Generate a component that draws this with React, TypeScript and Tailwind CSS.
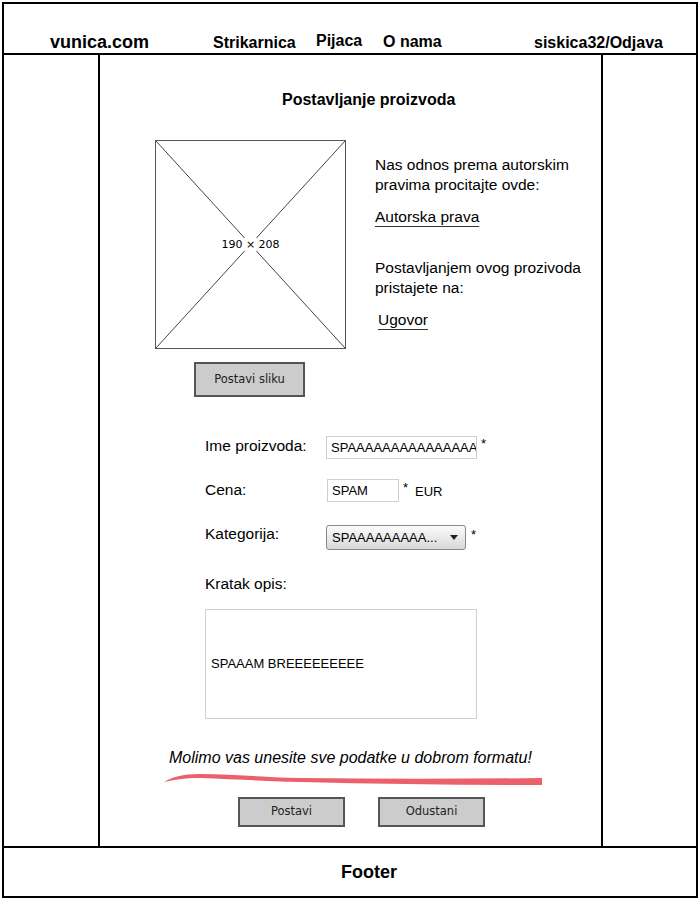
import React from 'react';

const Field: React.FC<{ w: string; text: string }> = ({ w, text }) => (
  <div className={`${w} h-[23px] border border-[#cfcfcf] bg-white pl-[4px] flex items-center overflow-hidden whitespace-nowrap text-[13px]`}>
    {text}
  </div>
);

const SketchButton: React.FC<{ label: string; w: string; h: string }> = ({ label, w, h }) => (
  <div className={`${w} ${h} bg-[#cccccc] border-2 border-[#555555] flex items-center justify-center font-['DejaVu_Sans',sans-serif] text-[11.5px] text-[#222]`}>
    {label}
  </div>
);

export default function App() {
  return (
    <div className="w-[700px] h-[900px] bg-white pl-[2px] pt-[2px] font-['Liberation_Sans',Arial,sans-serif] text-black">
      <div className="w-[696px] h-[896px] border-2 border-black flex flex-col">
        <header className="h-[51px] shrink-0 border-b-2 border-black flex items-start pt-[28px] pl-[46px] font-bold text-[16px] leading-[20px]">
          <span className="w-[163px] text-[18px]">vunica.com</span>
          <span className="w-[103px] mt-[1px]">Strikarnica</span>
          <span className="w-[67px] -mt-[1px]">Pijaca</span>
          <span className="w-[151px]">O nama</span>
          <span className="mt-[1px]">siskica32/Odjava</span>
        </header>

        <div className="flex flex-1 min-h-0">
          <div className="w-[96px] shrink-0 border-r-2 border-black" />

          <main className="w-[503px] shrink-0 border-r-2 border-black flex flex-col">
            <h1 className="pt-[35px] pl-[182px] text-[16px] leading-[20px] font-bold">Postavljanje proizvoda</h1>

            <div className="mt-[30px] flex items-start">
              <div className="ml-[55px] flex flex-col">
                <div className="relative w-[191px] h-[209px] border border-[#555555] flex items-center justify-center">
                  <svg className="absolute inset-0" width="189" height="207" viewBox="0 0 189 207">
                    <line x1="0" y1="0" x2="189" y2="207" stroke="#444" strokeWidth="1" />
                    <line x1="189" y1="0" x2="0" y2="207" stroke="#444" strokeWidth="1" />
                  </svg>
                  <span className="relative bg-white px-[1px] font-['DejaVu_Sans',sans-serif] text-[11px] leading-[13px]">190 × 208</span>
                </div>
                <div className="mt-[13px] ml-[39px]">
                  <SketchButton label="Postavi sliku" w="w-[111px]" h="h-[35px]" />
                </div>
              </div>

              <div className="ml-[29px] mt-[15px] text-[15.5px] leading-[20px]">
                <p>Nas odnos prema autorskim</p>
                <p>pravima procitajte ovde:</p>
                <p className="mt-[12px] underline underline-offset-[4px] decoration-[#333]">Autorska prava</p>
                <p className="mt-[31px]">Postavljanjem ovog prozivoda</p>
                <p>pristajete na:</p>
                <p className="mt-[12px] ml-[3px] underline underline-offset-[4px] decoration-[#333]">Ugovor</p>
              </div>
            </div>

            <div className="mt-[39px] ml-[105px] flex flex-col text-[15.5px] leading-[18px]">
              <div className="flex items-start">
                <span className="w-[121px] mt-[1px]">Ime proizvoda:</span>
                <Field w="w-[151px]" text="SPAAAAAAAAAAAAAAA" />
                <span className="ml-[4px] mt-[1px] text-[13px] leading-[14px]">*</span>
              </div>

              <div className="mt-[20px] flex items-start">
                <span className="w-[122px] mt-[2px]">Cena:</span>
                <Field w="w-[72px]" text="SPAM" />
                <span className="ml-[4px] mt-[2px] text-[13px] leading-[14px]">*</span>
                <span className="ml-[7px] mt-[5px] text-[13px] leading-[16px]">EUR</span>
              </div>

              <div className="mt-[23px] flex items-start">
                <span className="w-[121px]">Kategorija:</span>
                <div className="w-[140px] h-[25px] rounded-[3px] border border-[#888] bg-gradient-to-b from-[#fbfbfb] to-[#d9d9d9] flex items-center pl-[5px] pr-[7px] text-[13px]">
                  <span className="flex-1 whitespace-nowrap overflow-hidden">SPAAAAAAAAA...</span>
                  <svg width="8" height="5" viewBox="0 0 8 5">
                    <path d="M0 0 L8 0 L4 5 Z" fill="#222" />
                  </svg>
                </div>
                <span className="ml-[5px] mt-[3px] text-[13px] leading-[14px]">*</span>
              </div>

              <span className="mt-[25px]">Kratak opis:</span>

              <div className="mt-[16px] w-[272px] h-[110px] border border-[#cfcfcf] flex items-center pl-[5px] text-[13px]">
                SPAAAM BREEEEEEEEE
              </div>
            </div>

            <p className="mt-[29px] ml-[69px] italic text-[16px] leading-[20px]">Molimo vas unesite sve podatke u dobrom formatu!</p>

            <svg className="ml-[60px]" width="390" height="20" viewBox="0 0 390 20">
              <defs>
                <filter id="soft" x="-5%" y="-50%" width="110%" height="200%">
                  <feGaussianBlur stdDeviation="0.7" />
                </filter>
              </defs>
              <path
                d="M4 14 C 12 9, 22 6, 40 6 C 70 6, 100 9, 140 10 C 220 11, 300 11, 382 10 L 382 17 C 300 17, 220 16, 140 14 C 100 13, 70 11, 40 10 C 24 10, 14 12, 4 14 Z"
                fill="#e9505c"
                opacity="0.9"
                filter="url(#soft)"
              />
            </svg>

            <div className="mt-[9px] ml-[138px] flex gap-[33px]">
              <SketchButton label="Postavi" w="w-[107px]" h="h-[30px]" />
              <SketchButton label="Odustani" w="w-[107px]" h="h-[30px]" />
            </div>
          </main>

          <div className="flex-1" />
        </div>

        <footer className="h-[50px] shrink-0 border-t-2 border-black flex items-center pl-[337px] text-[18px] font-bold">
          Footer
        </footer>
      </div>
    </div>
  );
}
